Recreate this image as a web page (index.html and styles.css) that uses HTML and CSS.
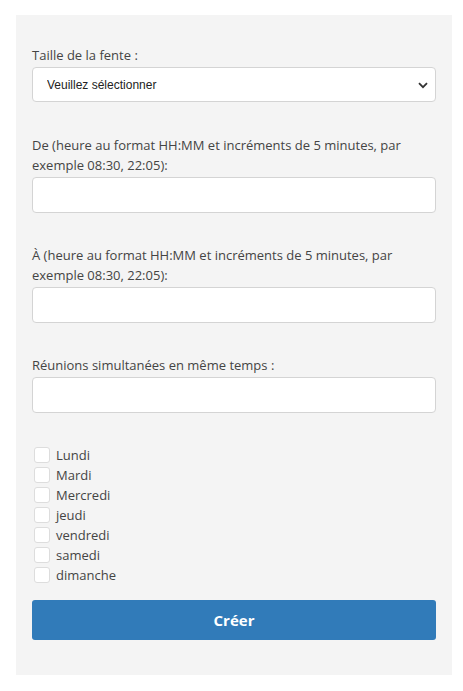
FILE: index.html
```html
<!DOCTYPE html>
<html lang="fr">
<head>
<meta charset="utf-8">
<title>Créneaux</title>
<link rel="stylesheet" href="styles.css">
</head>
<body>
<form class="panel">
  <div class="field field-select">
    <label class="label" for="size">Taille de la fente :</label>
    <div class="select-wrap">
      <select id="size" class="control select">
        <option>Veuillez sélectionner</option>
      </select>
      <svg class="chevron" width="10" height="7" viewBox="0 0 10 7"><path d="M1 1.2 L5 5.2 L9 1.2" fill="none" stroke="#333" stroke-width="1.8"/></svg>
    </div>
  </div>
  <div class="field">
    <label class="label" for="from">De (heure au format HH:MM et incréments de 5 minutes, par exemple 08:30, 22:05):</label>
    <input id="from" class="control" type="text">
  </div>
  <div class="field">
    <label class="label" for="to">À (heure au format HH:MM et incréments de 5 minutes, par exemple 08:30, 22:05):</label>
    <input id="to" class="control" type="text">
  </div>
  <div class="field">
    <label class="label" for="sim">Réunions simultanées en même temps :</label>
    <input id="sim" class="control" type="text">
  </div>
  <div class="days">
    <label class="day"><input type="checkbox" class="check"><span>Lundi</span></label>
    <label class="day"><input type="checkbox" class="check"><span>Mardi</span></label>
    <label class="day"><input type="checkbox" class="check"><span>Mercredi</span></label>
    <label class="day"><input type="checkbox" class="check"><span>jeudi</span></label>
    <label class="day"><input type="checkbox" class="check"><span>vendredi</span></label>
    <label class="day"><input type="checkbox" class="check"><span>samedi</span></label>
    <label class="day"><input type="checkbox" class="check"><span>dimanche</span></label>
  </div>
  <button type="button" class="submit">Créer</button>
</form>
</body>
</html>
```
FILE: styles.css
```css
html, body {
  margin: 0;
  padding: 0;
  background: #ffffff;
}
body {
  font-family: "Open Sans", "Liberation Sans", sans-serif;
  font-size: 13px;
  color: #444444;
}
.panel {
  box-sizing: border-box;
  margin: 15px 0 0 16px;
  width: 436px;
  height: 660px;
  background: #f4f4f4;
  padding: 30px 16px 0 16px;
  display: flex;
  flex-direction: column;
}
.field {
  display: flex;
  flex-direction: column;
  margin-bottom: 32px;
}
.field-select {
  margin-bottom: 33px;
}
.label {
  display: block;
  line-height: 20px;
  margin-bottom: 2px;
}
.control {
  box-sizing: border-box;
  width: 404px;
  height: 36px;
  background: #ffffff;
  border: 1px solid #d4d4d4;
  border-radius: 4px;
  margin: 0;
  padding: 0 14px;
  outline: none;
}
.select-wrap {
  position: relative;
}
.select {
  appearance: none;
  -webkit-appearance: none;
  height: 35px;
  font-family: "Liberation Sans", Arial, sans-serif;
  font-size: 12px;
  color: #222222;
}
.chevron {
  position: absolute;
  right: 8px;
  top: 15px;
  pointer-events: none;
}
.days {
  display: flex;
  flex-direction: column;
}
.day {
  display: flex;
  align-items: center;
  height: 20px;
  line-height: 20px;
}
.check {
  appearance: none;
  -webkit-appearance: none;
  box-sizing: border-box;
  width: 16px;
  height: 16px;
  margin: 0 6px 0 2px;
  background: #ffffff;
  border: 1px solid #dddddd;
  border-radius: 3px;
}
.submit {
  margin-top: 15px;
  width: 404px;
  height: 40px;
  background: #317bb9;
  color: #ffffff;
  border: none;
  border-radius: 3px;
  font-family: "Open Sans", "Liberation Sans", sans-serif;
  font-weight: 700;
  font-size: 15px;
}
```
